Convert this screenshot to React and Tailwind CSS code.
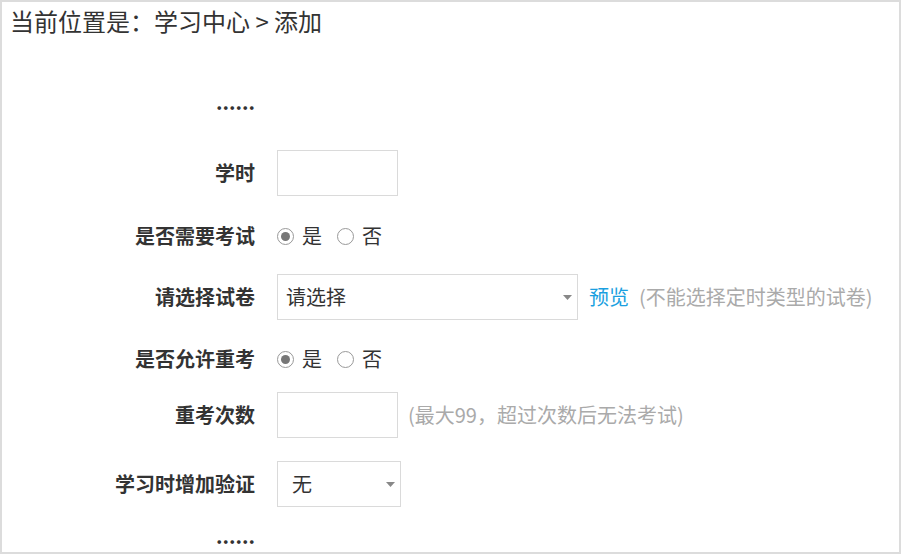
import React from 'react'

const font = { fontFamily: '"Noto Sans CJK SC", "Noto Sans", sans-serif' }

function Label({ children }) {
  return (
    <div className="w-[253px] shrink-0 text-right text-[20px] font-bold text-[#333] leading-none">
      {children}
    </div>
  )
}

function Radio({ checked, label }) {
  return (
    <span className="flex items-center">
      <span className="w-[17px] h-[17px] rounded-full border border-[#999] flex items-center justify-center bg-white">
        {checked && <span className="w-[9px] h-[9px] rounded-full bg-[#777]" />}
      </span>
      <span className="ml-[8px] text-[20px] text-[#333] leading-none">{label}</span>
    </span>
  )
}

function Select({ width, value, pad }) {
  return (
    <div className={`${width} h-[46px] border border-[#dadada] bg-white flex items-center justify-between ${pad} pr-[5px]`}>
      <span className="text-[20px] text-[#333] leading-none">{value}</span>
      <svg width="9" height="5" viewBox="0 0 9 5">
        <path d="M0 0h9L4.5 5z" fill="#888" />
      </svg>
    </div>
  )
}

export default function App() {
  return (
    <div style={font} className="w-full h-[554px] border-2 border-[#dcdcdc] bg-white overflow-hidden">
      <div className="pl-[8px] pt-[4px] text-[24px] text-[#333] leading-[30px]">
        当前位置是：学习中心 &gt; 添加
      </div>

      <div className="flex flex-col">
        <div className="flex items-center h-[46px] mt-[43px]">
          <Label>......</Label>
        </div>

        <div className="flex items-center h-[46px] mt-[25px]">
          <Label>学时</Label>
          <div className="ml-[22px] w-[121px] h-[46px] border border-[#dadada]" />
        </div>

        <div className="flex items-center h-[46px] mt-[17px]">
          <Label>是否需要考试</Label>
          <div className="ml-[22px] flex items-center gap-[15px]">
            <Radio checked label="是" />
            <Radio label="否" />
          </div>
        </div>

        <div className="flex items-center h-[46px] mt-[15px]">
          <Label>请选择试卷</Label>
          <div className="ml-[22px] flex items-center">
            <Select width="w-[301px]" value="请选择" pad="pl-[8px]" />
            <a className="ml-[11px] text-[20px] text-[#1a9fe0] leading-none cursor-pointer">预览</a>
            <span className="ml-[10px] text-[20px] text-[#aaa] leading-none">(不能选择定时类型的试卷)</span>
          </div>
        </div>

        <div className="flex items-center h-[46px] mt-[16px]">
          <Label>是否允许重考</Label>
          <div className="ml-[22px] flex items-center gap-[15px]">
            <Radio checked label="是" />
            <Radio label="否" />
          </div>
        </div>

        <div className="flex items-center h-[46px] mt-[10px]">
          <Label>重考次数</Label>
          <div className="ml-[22px] flex items-center">
            <div className="w-[121px] h-[46px] border border-[#dadada]" />
            <span className="ml-[10px] text-[20px] text-[#aaa] leading-none">(最大99，超过次数后无法考试)</span>
          </div>
        </div>

        <div className="flex items-center h-[46px] mt-[23px]">
          <Label>学习时增加验证</Label>
          <div className="ml-[22px]">
            <Select width="w-[124px]" value="无" pad="pl-[14px]" />
          </div>
        </div>

        <div className="flex items-center h-[46px] mt-[6px]">
          <Label>......</Label>
        </div>
      </div>
    </div>
  )
}
